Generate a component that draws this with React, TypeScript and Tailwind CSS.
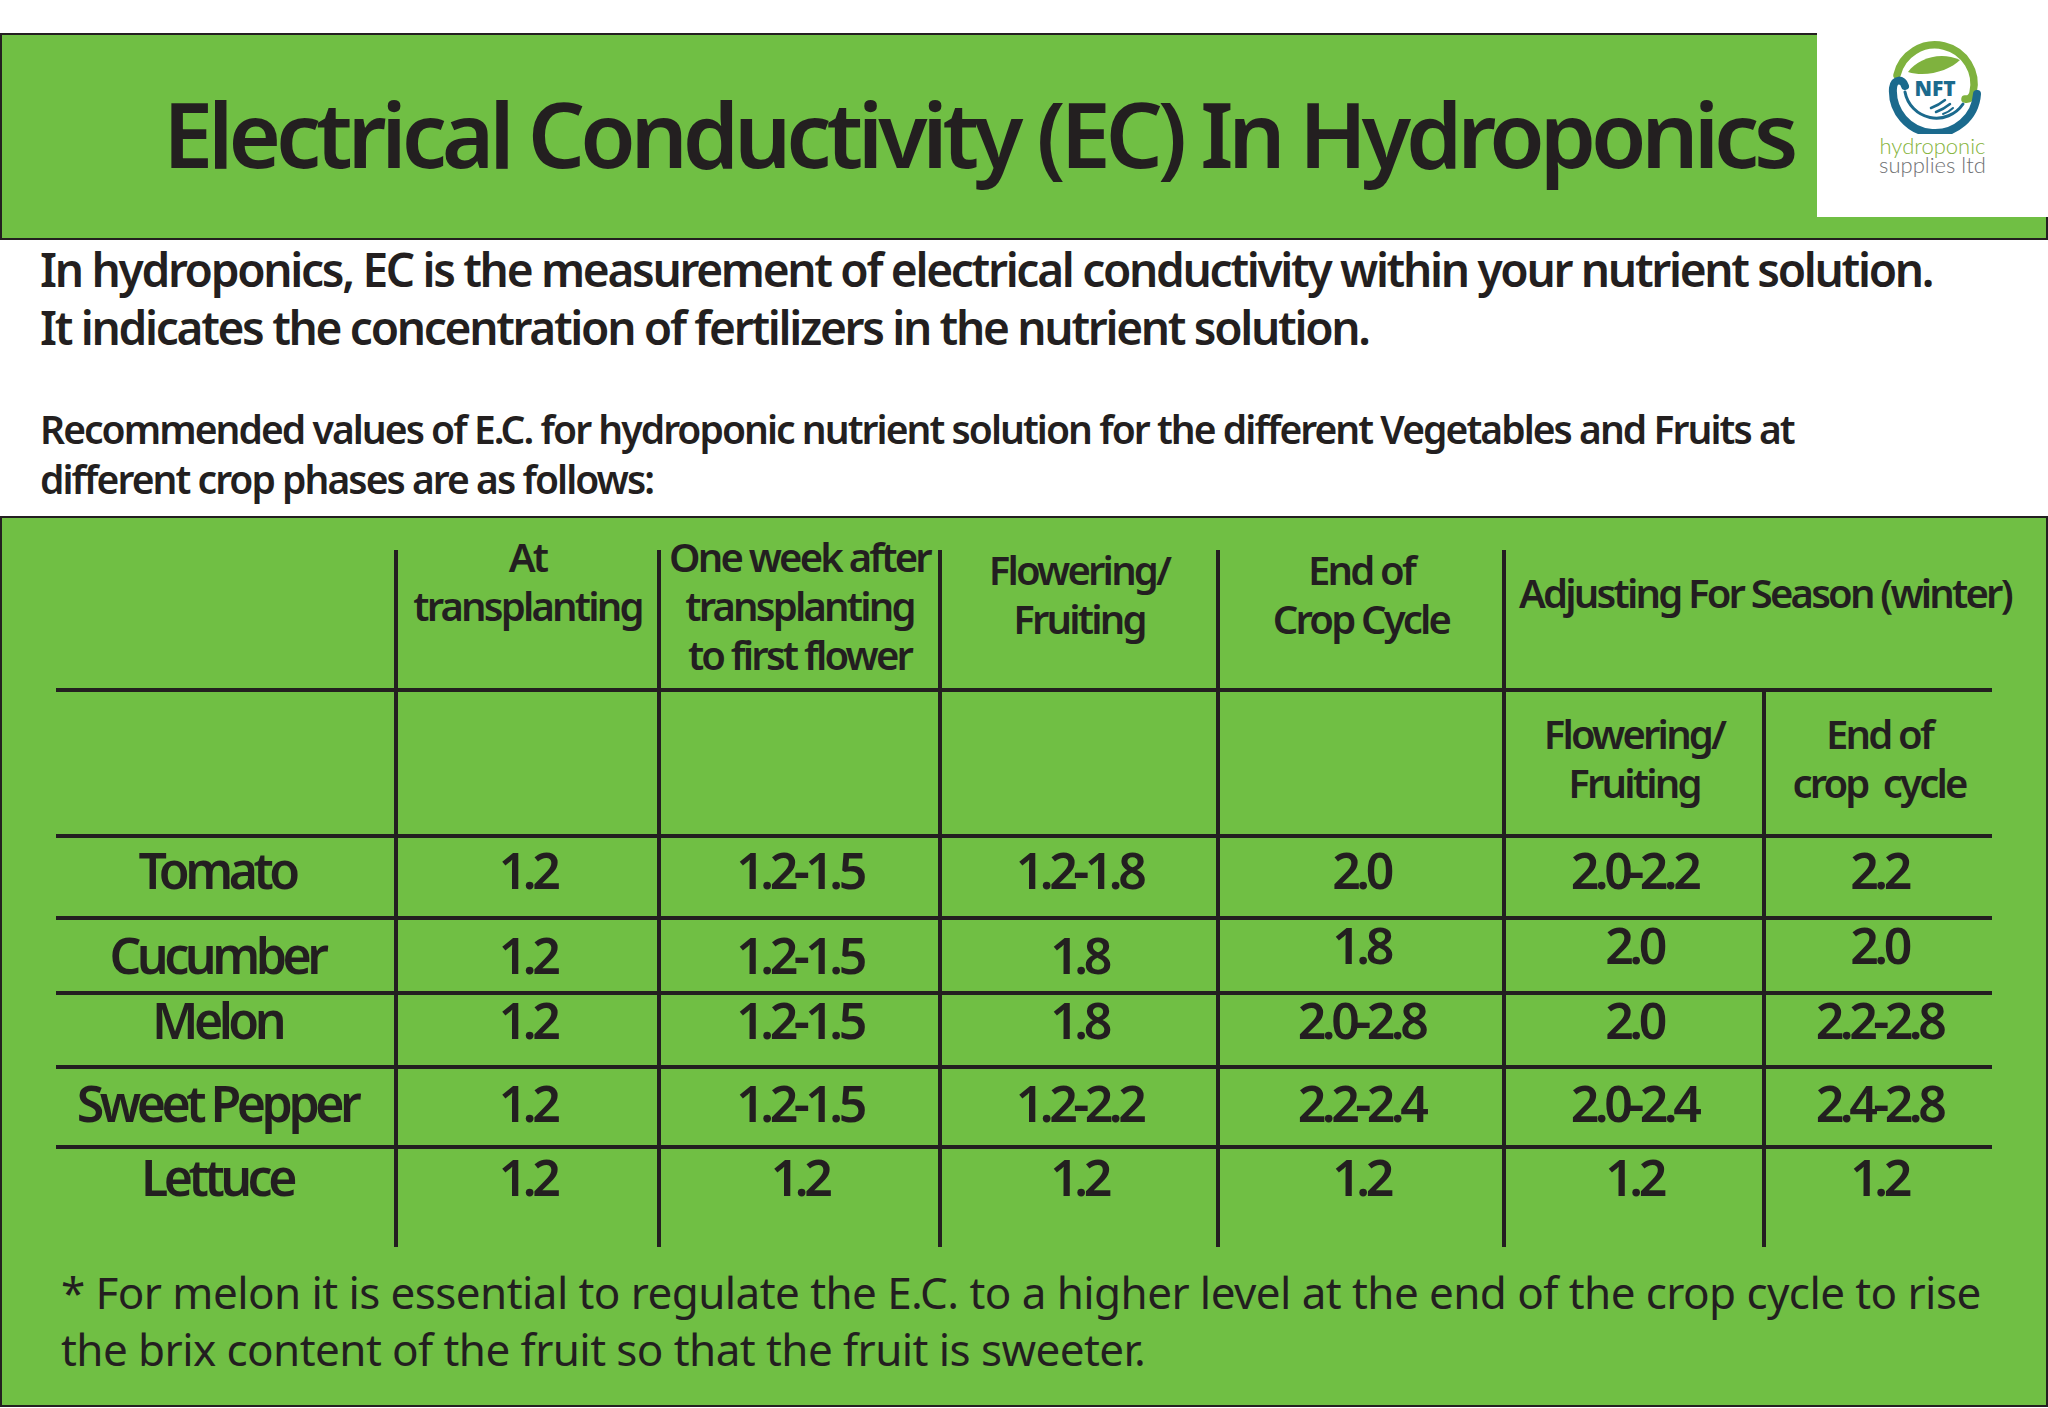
const rows = [
	{
		name: "Tomato",
		h: "h-[82px]",
		pt: "pt-[7px]",
		vals: ["1.2", "1.2-1.5", "1.2-1.8", "2.0", "2.0-2.2", "2.2"],
		up: [] as number[],
	},
	{
		name: "Cucumber",
		h: "h-[75px]",
		pt: "pt-[10px]",
		vals: ["1.2", "1.2-1.5", "1.8", "1.8", "2.0", "2.0"],
		up: [3, 4, 5],
	},
	{
		name: "Melon",
		h: "h-[74px]",
		pt: "pt-[0px]",
		vals: ["1.2", "1.2-1.5", "1.8", "2.0-2.8", "2.0", "2.2-2.8"],
		up: [] as number[],
	},
	{
		name: "Sweet Pepper",
		h: "h-[80px]",
		pt: "pt-[9px]",
		vals: ["1.2", "1.2-1.5", "1.2-2.2", "2.2-2.4", "2.0-2.4", "2.4-2.8"],
		up: [] as number[],
	},
	{
		name: "Lettuce",
		h: "h-[102px]",
		pt: "pt-[3px]",
		vals: ["1.2", "1.2", "1.2", "1.2", "1.2", "1.2"],
		up: [] as number[],
	},
];

function Logo() {
	return (
		<div className="-mt-[2px] -mr-[2px] flex h-[184px] w-[231px] shrink-0 flex-col items-center bg-white pt-[5px]">
			<svg width="100" height="96" viewBox="0 0 100 96">
				{/* leaf */}
				<path d="M25 34 C35 20, 58 13, 77 22 C67 32, 44 40, 25 34 Z" fill="#7fb23e" />
				{/* green outer arc */}
				<path
					d="M14 37 A39 39 0 1 1 90 55 Q88 62 82 61"
					fill="none"
					stroke="#7fb23e"
					strokeWidth="7.5"
					strokeLinecap="round"
				/>
				{/* blue lower arc with hook */}
				<path
					d="M22 48 C20 41, 11 40, 10 50 A42 42 0 0 0 94 56"
					fill="none"
					stroke="#1b6a8d"
					strokeWidth="8"
					strokeLinecap="round"
				/>
				<path
					d="M22 54 A32 32 0 0 0 80 66"
					fill="none"
					stroke="#1b6a8d"
					strokeWidth="3"
					strokeLinecap="round"
				/>
				<text
					x="52"
					y="58"
					textAnchor="middle"
					fontFamily="'Open Sans', sans-serif"
					fontWeight="800"
					fontSize="21"
					fill="#1b6a8d"
				>
					NFT
				</text>
				<path d="M48 70 Q56 67 62 62" fill="none" stroke="#1b6a8d" strokeWidth="2.5" strokeLinecap="round" />
				<path d="M53 74 Q61 71 67 66" fill="none" stroke="#1b6a8d" strokeWidth="2.5" strokeLinecap="round" />
				<path d="M60 76 Q66 74 70 70" fill="none" stroke="#1b6a8d" strokeWidth="2" strokeLinecap="round" />
			</svg>
			<div className="mt-[2px] font-['Lato',sans-serif] text-[22px] font-light leading-[19px] text-[#86b43c]">
				hydroponic
			</div>
			<div className="font-['Lato',sans-serif] text-[22px] font-light leading-[19px] text-[#707173]">
				supplies ltd
			</div>
		</div>
	);
}

export default function App() {
	const head = "text-[40px] leading-[49px] tracking-[-0.07em] whitespace-nowrap";
	const cell = "text-[50px] leading-[50px] tracking-[-0.09em] whitespace-nowrap";
	return (
		<div className="h-[1408px] w-[2048px] overflow-hidden bg-white pt-[33px] font-['Noto_Sans','Open_Sans',sans-serif] text-[#231f20]">
			{/* header */}
			<div className="flex h-[207px] border-2 border-[#231f20] bg-[#70bf44]">
				<div className="flex flex-1 items-center pb-[8px] pl-[161px]">
					<h1 className="text-[90px] font-semibold leading-none tracking-[-0.057em] whitespace-nowrap">
						Electrical Conductivity (EC) In Hydroponics
					</h1>
				</div>
				<Logo />
			</div>

			{/* intro */}
			<div className="pl-[40px] font-semibold whitespace-nowrap">
				<p className="text-[46px] leading-[58px] tracking-[-0.05em]">
					In hydroponics, EC is the measurement of electrical conductivity within your nutrient solution.
					<br />
					It indicates the concentration of fertilizers in the nutrient solution.
				</p>
				<p className="mt-[48px] text-[39px] leading-[50px] tracking-[-0.05em]">
					Recommended values of E.C. for hydroponic nutrient solution for the different Vegetables and Fruits at
					<br />
					different crop phases are as follows:
				</p>
			</div>

			{/* table panel */}
			<div className="mt-[12px] h-[891px] border-2 border-[#231f20] bg-[#70bf44] pl-[54px] pt-[32px]">
				<div className="grid w-[1936px] grid-cols-[338px_263px_281px_278px_286px_260px_230px] font-semibold">
					{/* header row 1 */}
					<div className="h-[138px]" />
					<div className={`flex h-[138px] flex-col items-center border-l-4 border-[#231f20] ${head}`}>
						<div className="-mt-[18px] text-center">
							At
							<br />
							transplanting
						</div>
					</div>
					<div className={`flex h-[138px] flex-col items-center border-l-4 border-[#231f20] ${head}`}>
						<div className="-mt-[18px] text-center">
							One week after
							<br />
							transplanting
							<br />
							to first flower
						</div>
					</div>
					<div className={`flex h-[138px] flex-col items-center border-l-4 border-[#231f20] ${head}`}>
						<div className="-mt-[5px] text-center">
							Flowering/
							<br />
							Fruiting
						</div>
					</div>
					<div className={`flex h-[138px] flex-col items-center border-l-4 border-[#231f20] ${head}`}>
						<div className="-mt-[5px] text-center">
							End of
							<br />
							Crop Cycle
						</div>
					</div>
					<div className={`col-span-2 h-[138px] border-l-4 border-[#231f20] pl-[13px] pt-[18px] ${head}`}>
						Adjusting For Season (winter)
					</div>

					{/* header row 2 */}
					<div className="h-[146px] border-t-4 border-[#231f20]" />
					<div className="h-[146px] border-t-4 border-l-4 border-[#231f20]" />
					<div className="h-[146px] border-t-4 border-l-4 border-[#231f20]" />
					<div className="h-[146px] border-t-4 border-l-4 border-[#231f20]" />
					<div className="h-[146px] border-t-4 border-l-4 border-[#231f20]" />
					<div className={`flex h-[146px] flex-col items-center border-t-4 border-l-4 border-[#231f20] pt-[17px] ${head}`}>
						<div className="text-center">
							Flowering/
							<br />
							Fruiting
						</div>
					</div>
					<div className={`flex h-[146px] flex-col items-center border-t-4 border-l-4 border-[#231f20] pt-[17px] ${head}`}>
						<div className="text-center whitespace-pre">
							End of
							<br />
							{"crop  cycle"}
						</div>
					</div>

					{/* data rows */}
					{rows.map((row) => (
						<div key={row.name} className="contents">
							<div className={`${row.h} border-t-4 border-[#231f20] pr-[16px] text-center ${cell} ${row.pt}`}>
								{row.name}
							</div>
							{row.vals.map((v, i) => (
								<div
									key={i}
									className={`${row.h} border-t-4 border-l-4 border-[#231f20] text-center ${cell} ${
										row.up.includes(i) ? "pt-[0px]" : row.pt
									}`}
								>
									{v}
								</div>
							))}
						</div>
					))}
				</div>

				{/* footnote */}
				<p className="mt-[17px] pl-[5px] text-[44px] font-normal leading-[57px] tracking-[-0.013em] whitespace-nowrap">
					* For melon it is essential to regulate the E.C. to a higher level at the end of the crop cycle to rise
					<br />
					the brix content of the fruit so that the fruit is sweeter.
				</p>
			</div>
		</div>
	);
}
